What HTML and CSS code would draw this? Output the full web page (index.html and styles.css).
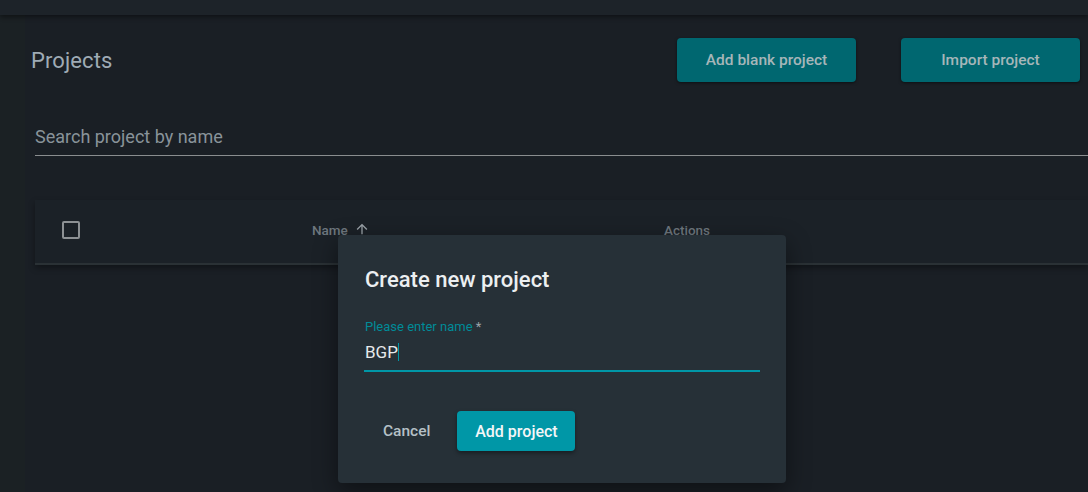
FILE: index.html
```html
<!DOCTYPE html>
<html lang="en">
<head>
<meta charset="utf-8">
<title>Projects</title>
<link rel="stylesheet" href="styles.css">
</head>
<body>
<div class="topbar"></div>
<div class="layout">
  <div class="rail"></div>
  <main class="main">
    <div class="page-head">
      <h1 class="page-title">Projects</h1>
      <div class="head-actions">
        <button class="btn btn-dark">Add blank project</button>
        <button class="btn btn-dark">Import project</button>
      </div>
    </div>
    <div class="search">
      <span class="search-placeholder">Search project by name</span>
    </div>
    <div class="table-head">
      <div class="col-check"><span class="checkbox"></span></div>
      <div class="col-name">Name
        <svg class="sort-icon" viewBox="0 0 24 24" width="16" height="16"><path d="M4 12l1.41 1.41L11 7.83V20h2V7.83l5.58 5.59L20 12l-8-8-8 8z" fill="#9aa2a8"/></svg>
      </div>
      <div class="col-actions">Actions</div>
    </div>
  </main>
</div>

<div class="dialog">
  <h2 class="dialog-title">Create new project</h2>
  <div class="field">
    <label class="field-label">Please enter name <span class="req">*</span></label>
    <div class="field-input"><span class="value">BGP</span><span class="caret"></span></div>
  </div>
  <div class="dialog-actions">
    <button class="btn-text">Cancel</button>
    <button class="btn btn-primary">Add project</button>
  </div>
</div>
</body>
</html>
```

FILE: styles.css
```css
* { box-sizing: border-box; }
html, body {
  margin: 0;
  height: 100%;
}
body {
  background: #1a1f25;
  font-family: Roboto, "Liberation Sans", sans-serif;
  overflow: hidden;
  position: relative;
}
.topbar {
  height: 15px;
  background: #1d2329;
  box-shadow: 0 2px 5px rgba(0,0,0,0.45);
  position: relative;
  z-index: 2;
}
.layout {
  display: flex;
  height: 477px;
}
.rail {
  width: 25px;
  background: #1b2124;
  flex: none;
}
.main {
  flex: 1;
  padding-top: 23px;
}
.page-head {
  display: flex;
  align-items: center;
  justify-content: space-between;
  padding-left: 6px;
  padding-right: 8px;
}
.page-title {
  margin: 0;
  font-size: 22px;
  font-weight: 400;
  color: #9fabb5;
  letter-spacing: 0.1px;
}
.head-actions {
  display: flex;
  gap: 45px;
}
.btn {
  border: none;
  border-radius: 4px;
  font-family: Roboto, "Liberation Sans", sans-serif;
  font-weight: 500;
  cursor: pointer;
}
.btn-dark {
  width: 179px;
  height: 44px;
  background: #006770;
  color: #a6b6b9;
  font-size: 15.5px;
  box-shadow: 0 1px 3px rgba(0,0,0,0.5);
}
.search {
  margin-left: 10px;
  margin-top: 38px;
  height: 36px;
  border-bottom: 1px solid #8a8d8f;
  display: flex;
  align-items: center;
}
.search-placeholder {
  font-size: 18px;
  color: #89939a;
  padding-bottom: 2px;
}
.table-head {
  margin-left: 10px;
  margin-top: 44px;
  height: 65px;
  padding-bottom: 3px;
  background: #1b2127;
  border-bottom: 2px solid #2a3135;
  box-shadow: 0 3px 6px rgba(0,0,0,0.35);
  display: flex;
  align-items: center;
  font-size: 13.5px;
  font-weight: 500;
  color: #6e777e;
}
.col-check {
  width: 277px;
  padding-left: 27px;
  display: flex;
  align-items: center;
}
.checkbox {
  width: 18px;
  height: 18px;
  border: 2px solid #8d9194;
  border-radius: 2px;
}
.col-name {
  width: 352px;
  display: flex;
  align-items: center;
  gap: 6px;
}
.sort-icon { display: block; margin-top: -3px; }
.col-actions { }

.dialog {
  position: absolute;
  left: 338px;
  top: 235px;
  width: 448px;
  height: 248px;
  background: #263037;
  border-radius: 4px;
  box-shadow: 0 8px 24px rgba(0,0,0,0.45);
  padding: 29px 26px 0 27px;
  z-index: 5;
}
.dialog-title {
  margin: 0;
  font-size: 22px;
  line-height: 32px;
  font-weight: 500;
  color: #eceff1;
}
.field {
  margin-top: 24px;
}
.field-label {
  display: block;
  font-size: 13px;
  color: #008b98;
  line-height: 14px;
}
.req { color: #9aa3a8; }
.field-input {
  margin-top: 7px;
  height: 31px;
  border-bottom: 2px solid #0097a7;
  display: flex;
  align-items: flex-start;
  margin-left: -1px;
  padding-left: 1px;
}
.value {
  font-size: 17px;
  line-height: 22px;
  color: #e6e9eb;
}
.caret {
  width: 1px;
  height: 18px;
  margin-top: 2px;
  background: #0097a7;
}
.dialog-actions {
  margin-top: 39px;
  display: flex;
  align-items: center;
  gap: 27px;
  padding-left: 18px;
}
.btn-text {
  background: none;
  border: none;
  font-family: Roboto, "Liberation Sans", sans-serif;
  font-size: 15.5px;
  font-weight: 500;
  color: #b5c0c6;
  padding: 0;
}
.btn-primary {
  width: 118px;
  height: 40px;
  background: #0097a7;
  color: #f3f6f7;
  font-size: 16px;
  box-shadow: 0 2px 4px rgba(0,0,0,0.4);
}
```
